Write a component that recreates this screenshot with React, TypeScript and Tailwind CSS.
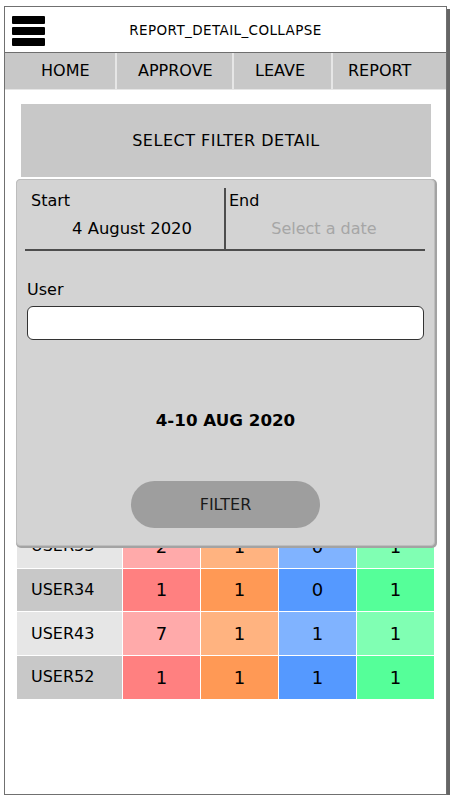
import React from "react";

type Row = { name: string; values: [number, number, number, number] };

const rows: Row[] = [
  { name: "USER12", values: [1, 0, 1, 1] },
  { name: "USER17", values: [3, 1, 0, 1] },
  { name: "USER21", values: [1, 2, 1, 0] },
  { name: "USER25", values: [0, 1, 1, 1] },
  { name: "USER28", values: [2, 1, 0, 1] },
  { name: "USER30", values: [1, 1, 1, 2] },
  { name: "USER31", values: [4, 0, 1, 1] },
  { name: "USER33", values: [2, 1, 0, 1] },
  { name: "USER34", values: [1, 1, 0, 1] },
  { name: "USER43", values: [7, 1, 1, 1] },
  { name: "USER52", values: [1, 1, 1, 1] },
];

const lightCells = ["bg-[#ffaaaa]", "bg-[#ffb380]", "bg-[#80b3ff]", "bg-[#80ffb3]"];
const darkCells = ["bg-[#ff8080]", "bg-[#ff9955]", "bg-[#5599ff]", "bg-[#55ff99]"];

function Hamburger() {
  return (
    <div className="flex flex-col gap-[3px]">
      <div className="h-[8px] w-[33px] rounded-[1px] bg-black" />
      <div className="h-[8px] w-[33px] rounded-[1px] bg-black" />
      <div className="h-[8px] w-[33px] rounded-[1px] bg-black" />
    </div>
  );
}

function FilterPanel() {
  return (
    <div className="absolute left-[11px] top-[172px] flex h-[367px] w-[419px] flex-col rounded-[4px] border border-[#bdbdbd] bg-[#d3d3d3] shadow-[1px_1px_0_1px_#a3a3a3]">
      <div className="ml-[8px] mr-[9px] mt-[8px] flex border-b-2 border-[#4d4d4d]">
        <div className="h-[61px] w-[199px] pt-[3px]">
          <div className="pl-[6px] leading-5">Start</div>
          <div className="mt-[8px] pl-[15px] text-center text-[16.4px] leading-5">4 August 2020</div>
        </div>
        <div className="h-[61px] flex-1 border-l-2 border-[#4d4d4d] pt-[3px]">
          <div className="pl-[3px] leading-5">End</div>
          <div className="mt-[8px] pr-[3px] text-center leading-5 text-[#a6a6a6]">Select a date</div>
        </div>
      </div>
      <div className="px-[10px]">
        <div className="mt-[29px] leading-5">User</div>
        <input
          type="text"
          className="mt-[6px] h-[34px] w-full rounded-[6px] border border-[#333] bg-white px-2 outline-none"
        />
      </div>
      <div className="mt-[70px] text-center text-[16.7px] font-bold leading-5">4-10 AUG 2020</div>
      <button className="mx-auto mt-[51px] h-[47px] w-[189px] rounded-full bg-[#9e9e9e] text-[16px] text-[#1a1a1a]">
        FILTER
      </button>
    </div>
  );
}

export default function App() {
  return (
    <div className="bg-white font-['DejaVu_Sans',Verdana,sans-serif] text-[16px] text-black">
      <div className="relative ml-[4px] mt-[6px] h-[789px] w-[443px] border border-[#707070] bg-white shadow-[3px_3px_0_#666]">
        <header className="grid h-[46px] grid-cols-[1fr_auto_1fr] items-center border-b border-[#6e6e6e]">
          <div className="pl-[7px] pt-[2px]">
            <Hamburger />
          </div>
          <div className="pt-[1px] text-[13.5px] tracking-[0.4px]">REPORT_DETAIL_COLLAPSE</div>
          <div />
        </header>

        <nav className="flex h-[37px] gap-[2px] border-b border-[#e6e6e6] bg-[#e6e6e6]">
          <div className="flex w-[110px] items-center bg-[#c8c8c8] pl-[36px]">HOME</div>
          <div className="flex w-[115px] items-center bg-[#c8c8c8] pl-[21px]">APPROVE</div>
          <div className="flex w-[97px] items-center bg-[#c8c8c8] pl-[21px]">LEAVE</div>
          <div className="flex flex-1 items-center bg-[#c8c8c8] pl-[15px]">REPORT</div>
        </nav>

        <div className="ml-[16px] mt-[14px] flex h-[73px] w-[410px] items-center justify-center bg-[#c8c8c8] tracking-[0.5px]">
          SELECT FILTER DETAIL
        </div>

        <div className="ml-[12px] mt-[42px] grid w-[417px] auto-rows-[42.7px] grid-cols-[105px_1fr_1fr_1fr_1fr] gap-px">
          {rows.map((row, i) => {
            const light = i % 2 === 1;
            const cells = light ? lightCells : darkCells;
            return (
              <React.Fragment key={row.name}>
                <div className={`flex items-center pl-[14px] ${light ? "bg-[#e6e6e6]" : "bg-[#c8c8c8]"}`}>
                  {row.name}
                </div>
                {row.values.map((v, j) => (
                  <div key={j} className={`flex items-center justify-center text-[18px] ${cells[j]}`}>
                    {v}
                  </div>
                ))}
              </React.Fragment>
            );
          })}
        </div>

        <FilterPanel />
      </div>
    </div>
  );
}
